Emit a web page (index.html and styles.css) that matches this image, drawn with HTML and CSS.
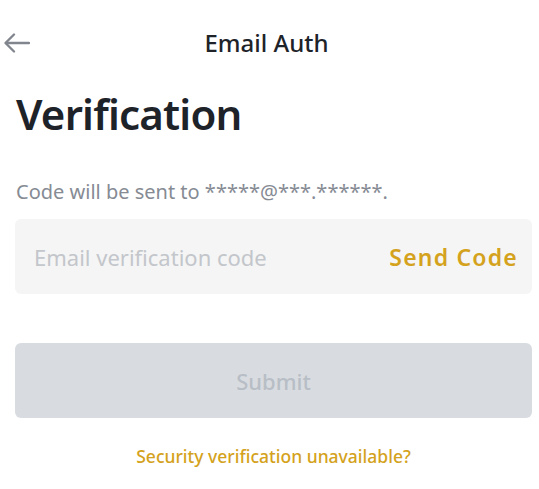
FILE: index.html
```html
<!DOCTYPE html>
<html lang="en">
<head>
<meta charset="utf-8">
<title>Email Auth</title>
<link rel="stylesheet" href="styles.css">
</head>
<body>
<div class="page">
  <header class="topbar">
    <button class="back" aria-label="Back">
      <svg width="26" height="20" viewBox="0 0 26 20" fill="none" stroke="#80858e" stroke-width="2.3" stroke-linecap="round" stroke-linejoin="round">
        <path d="M25 10H2"/>
        <path d="M10 1.5L1.5 10L10 18.5"/>
      </svg>
    </button>
    <h1 class="title">Email Auth</h1>
    <span></span>
  </header>
  <main class="content">
    <h2 class="heading">Verification</h2>
    <p class="hint">Code will be sent to *****@***.******.</p>
    <div class="field">
      <span class="placeholder">Email verification code</span>
      <span class="send">Send Code</span>
    </div>
    <button class="submit">Submit</button>
    <a class="help">Security verification unavailable?</a>
  </main>
</div>
</body>
</html>
```
FILE: styles.css
```css
* { box-sizing: border-box; }
html, body { margin: 0; padding: 0; background: #ffffff; }
body {
  font-family: "Noto Sans", "Open Sans", sans-serif;
  color: #1e2329;
}
.page { width: 539px; height: 489px; overflow: hidden; }
.topbar {
  display: grid;
  grid-template-columns: 1fr auto 1fr;
  align-items: center;
  height: 86px;
  padding: 0 10px 0 4px;
}
.back {
  border: 0;
  background: none;
  padding: 0;
  width: 26px;
  height: 20px;
  display: flex;
}
.title {
  margin: 0;
  font-size: 24px;
  line-height: 32px;
  font-weight: 500;
  color: #1e2329;
}
.content {
  padding: 0 7px 0 15px;
  display: flex;
  flex-direction: column;
}
.heading {
  margin: 0 0 0 1px;
  font-size: 42px;
  line-height: 56px;
  font-weight: 600;
  letter-spacing: -0.8px;
  color: #1e2329;
}
.hint {
  margin: 37px 0 0 1px;
  font-size: 20px;
  line-height: 26px;
  color: #868b94;
}
.field {
  margin-top: 14px;
  height: 75px;
  background: #f5f5f5;
  border-radius: 6px;
  display: flex;
  align-items: center;
  justify-content: space-between;
  padding: 0 15px 0 19px;
  font-size: 22px;
}
.placeholder { color: #c3c6cb; }
.send {
  color: #d4a21c;
  font-weight: 600;
  font-size: 23px;
  letter-spacing: 1.2px;
  margin-right: -1px;
}
.submit {
  margin-top: 49px;
  height: 75px;
  border: 0;
  border-radius: 6px;
  background: #d8dce0;
  color: #b8bec6;
  font-family: inherit;
  font-size: 22px;
  font-weight: 500;
}
.help {
  margin-top: 26px;
  align-self: center;
  font-size: 17.5px;
  line-height: 24px;
  font-weight: 500;
  color: #d4a21c;
}
```
